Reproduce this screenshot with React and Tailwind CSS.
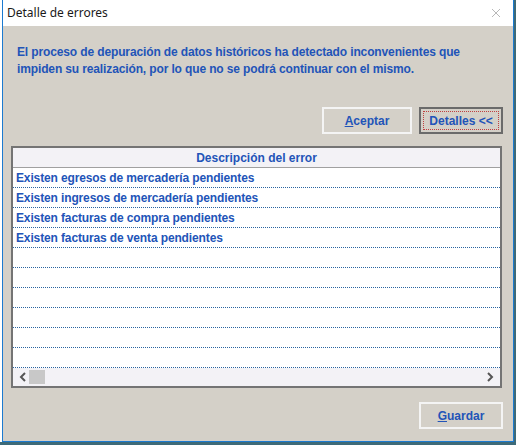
import React from 'react';

const rows = [
  'Existen egresos de mercadería pendientes',
  'Existen ingresos de mercadería pendientes',
  'Existen facturas de compra pendientes',
  'Existen facturas de venta pendientes',
  '', '', '', '', '', '',
];

const Button = ({ children, focused, className = '' }) => (
  <div
    className={`flex items-center justify-center h-[27px] ${
      focused ? 'border-2 border-[#6b6b6b] p-[2px]' : 'border-2 border-[#f4f4f4]'
    } ${className}`}
  >
    <div
      className={`flex items-center justify-center w-full h-full font-bold text-[12px] text-[#2254b8] ${
        focused ? 'border border-dotted border-[#c04040]' : ''
      }`}
    >
      {children}
    </div>
  </div>
);

export default function App() {
  return (
    <div
      className="w-[516px] h-[445px] bg-[#3d6a78] flex flex-col overflow-hidden"
      style={{ fontFamily: '"Liberation Sans", Arial, sans-serif' }}
    >
      <div className="flex h-[442px]">
        <div className="w-[2px] bg-white" />
        {/* Window */}
        <div className="w-[512px] h-full border-x border-b border-[#1b7ad0] bg-[#d4d0c8] flex flex-col">
          {/* Title bar */}
          <div className="h-[26px] bg-white flex items-center justify-between pl-[4px] pr-[10px]">
            <span
              className="text-[12px] text-[#1a1a1a]"
              style={{ fontFamily: '"Noto Sans", "DejaVu Sans", sans-serif' }}
            >
              Detalle de errores
            </span>
            <svg width="10" height="10" viewBox="0 0 10 10" className="mr-[2px]">
              <path d="M1 1L9 9M9 1L1 9" stroke="#b8b8b8" strokeWidth="1" />
            </svg>
          </div>

          {/* Message */}
          <div className="pl-[14px] pt-[18px] text-[12px] leading-[17px] font-bold tracking-[-0.13px] text-[#2254b8]">
            <p>El proceso de depuración de datos históricos ha detectado inconvenientes que</p>
            <p>impiden su realización, por lo que no se podrá continuar con el mismo.</p>
          </div>

          {/* Top buttons */}
          <div className="flex justify-end gap-[7px] pr-[10px] mt-[29px]">
            <Button className="w-[90px]">
              <span><span className="underline">A</span>ceptar</span>
            </Button>
            <Button focused className="w-[84px]">Detalles &lt;&lt;</Button>
          </div>

          {/* Table */}
          <div className="ml-[8px] mt-[12px] w-[491px] h-[242px] border-2 border-[#747474] bg-white flex flex-col">
            <div className="h-[20px] shrink-0 bg-[#f3f2f6] border-b border-[#a0a0a0] flex items-center justify-center text-[12px] font-bold text-[#2254b8]">
              Descripción del error
            </div>
            {rows.map((r, i) => (
              <div
                key={i}
                className="h-[20px] shrink-0 border-b border-dotted border-[#2a64a0] flex items-center pl-[3px] text-[12px] font-bold tracking-[-0.13px] text-[#2254b8]"
              >
                {r}
              </div>
            ))}
            <div className="flex-1 bg-[#f3f2f6] flex items-center px-[6px]">
              <svg width="8" height="10" viewBox="0 0 8 10">
                <path d="M6 1L2 5L6 9" stroke="#555" strokeWidth="2" fill="none" />
              </svg>
              <div className="ml-[2px] w-[16px] h-[14px] bg-[#c8c8c8]" />
              <div className="flex-1" />
              <svg width="8" height="10" viewBox="0 0 8 10">
                <path d="M2 1L6 5L2 9" stroke="#555" strokeWidth="2" fill="none" />
              </svg>
            </div>
          </div>

          {/* Bottom button */}
          <div className="flex justify-end pr-[10px] mt-[14px]">
            <Button className="w-[84px]">
              <span><span className="underline">G</span>uardar</span>
            </Button>
          </div>
        </div>
        <div className="w-[2px] bg-[#3d6a78]" />
      </div>
    </div>
  );
}
